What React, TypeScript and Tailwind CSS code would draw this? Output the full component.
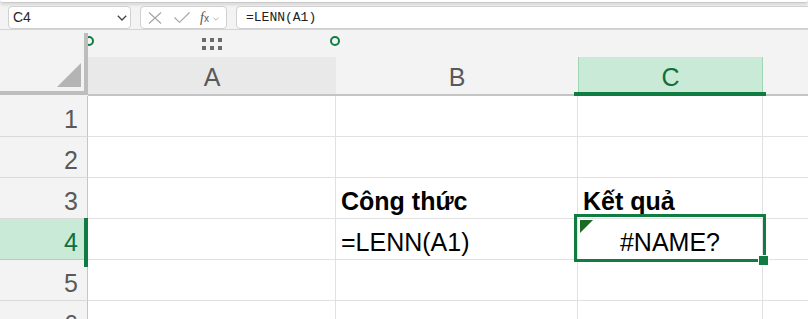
import React from "react";

type Cell = { text: string; bold?: boolean; center?: boolean; error?: boolean };

const COLS = [
  { key: "A", w: "w-[248px]" },
  { key: "B", w: "w-[242px]" },
  { key: "C", w: "w-[185px]" },
];

const ROWS: { n: number; cells: Record<string, Cell> }[] = [
  { n: 1, cells: {} },
  { n: 2, cells: {} },
  { n: 3, cells: { B: { text: "Công thức", bold: true }, C: { text: "Kết quả", bold: true } } },
  { n: 4, cells: { B: { text: "=LENN(A1)" }, C: { text: "#NAME?", center: true, error: true } } },
  { n: 5, cells: {} },
  { n: 6, cells: {} },
];

function Chevron({ className }: { className?: string }) {
  return (
    <svg viewBox="0 0 10 6" className={className} fill="none" stroke="currentColor" strokeWidth="1.3">
      <path d="M0.8 0.8 L5 5 L9.2 0.8" />
    </svg>
  );
}

function FormulaBar() {
  return (
    <div className="flex h-[27px] items-end gap-[9px] border-b border-[#d4d4d4] px-2">
      {/* name box */}
      <div className="flex h-[23px] w-[123px] items-center justify-between rounded-[4px] border border-[#d0d0d0] bg-white pl-[4px] pr-[3px] text-[14px] text-[#262626]">
        <span>C4</span>
        <Chevron className="h-[6px] w-[10px] text-[#444]" />
      </div>

      {/* cancel / enter / fx */}
      <div className="flex h-[23px] w-[87px] items-center rounded-[4px] border border-[#d0d0d0] bg-white pl-[7px]">
        <svg viewBox="0 0 14 12" className="h-[12px] w-[14px]" stroke="#a3a3a3" strokeWidth="1.1" fill="none">
          <path d="M1 0.5 L13 11.5 M13 0.5 L1 11.5" />
        </svg>
        <svg viewBox="0 0 16 11" className="ml-[12px] h-[11px] w-[16px]" stroke="#a3a3a3" strokeWidth="1.1" fill="none">
          <path d="M0.5 5.5 L5.5 10.3 L15.5 0.5" />
        </svg>
        <span className="ml-[10px] font-['Liberation_Serif',serif] text-[14px] italic leading-none text-[#555]">
          f<span className="text-[10px] not-italic font-['Liberation_Sans',sans-serif]">x</span>
        </span>
        <Chevron className="ml-[4px] mt-[2px] h-[4px] w-[6px] text-[#9a9a9a]" />
      </div>

      {/* formula input */}
      <div className="-mr-3 flex h-[23px] flex-1 items-center rounded-l-[4px] border border-[#d0d0d0] bg-white pl-[9px] font-['Liberation_Mono',monospace] text-[13px] text-[#222]">
        =LENN(A1)
      </div>
    </div>
  );
}

export default function App() {
  return (
    <div className="relative h-[319px] w-[808px] overflow-hidden bg-[#f3f3f3] font-['Liberation_Sans',Arial,sans-serif]">
      <div className="h-[3px] rounded-b-[6px] border-b border-[#c8c8c8] bg-white shadow-[0_2px_3px_rgba(0,0,0,0.12)]" />
      <FormulaBar />

      {/* column header block */}
      <div className="flex h-[66px]">
        <div className="relative z-10 w-[88px] pt-[3px]">
          <div className="relative h-[62px] border-b-[4px] border-r-[4px] border-[#bdbdbd]">
            <div className="absolute bottom-[4px] right-[3px] h-[24px] w-[24px] bg-[#b4b4b4] [clip-path:polygon(100%_0,100%_100%,0_100%)]" />
          </div>
        </div>
        <div className="flex flex-1 flex-col">
          <div className="flex h-[27px]">
            <div className="flex w-[248px] items-center justify-center">
              <div className="grid grid-cols-3 gap-x-[4px] gap-y-[4px]">
                {Array.from({ length: 6 }).map((_, i) => (
                  <span key={i} className="h-[4px] w-[4px] bg-[#6b6b6b]" />
                ))}
              </div>
            </div>
          </div>
          <div className="flex h-[39px] border-b-2 border-[#c4c4c4] text-[25px] leading-[28px]">
            <div className="flex w-[248px] items-end justify-center bg-[#e9e9e9] pb-[3px] text-[#595959]">A</div>
            <div className="flex w-[242px] items-end justify-center pb-[3px] text-[#595959]">B</div>
            <div className="flex w-[185px] items-end justify-center border-x border-[#9fd4b4] bg-[#caead8] pb-[3px] text-[#0f6f3a]">
              C
            </div>
            <div className="flex-1" />
          </div>
        </div>
      </div>

      {/* rows */}
      {ROWS.map((r) => {
        const sel = r.n === 4;
        return (
          <div key={r.n} className="flex h-[41px] text-[25px] leading-[28px]">
            <div
              className={
                sel
                  ? "flex w-[88px] items-end justify-end border-b border-r border-b-[#a8d6bb] border-r-[#c6c6c6] bg-[#caead8] pb-[3px] pr-[9px] text-[#0f6f3a]"
                  : "flex w-[88px] items-end justify-end border-b border-r border-b-[#dadada] border-r-[#c6c6c6] pb-[3px] pr-[9px] text-[#595959]"
              }
            >
              {r.n}
            </div>
            {COLS.map((c) => {
              const cell = r.cells[c.key];
              return (
                <div
                  key={c.key}
                  className={`relative flex ${c.w} items-end border-b border-r border-[#e1e1e1] bg-white pb-[3px] ${
                    cell?.center ? "justify-center" : "pl-[5px]"
                  } text-black`}
                >
                  {cell?.error && (
                    <div className="absolute left-[2px] top-[1px] h-[13px] w-[13px] bg-[#1d6b22] [clip-path:polygon(0_0,100%_0,0_100%)]" />
                  )}
                  {cell && <span className={cell.bold ? "font-bold" : ""}>{cell.text}</span>}
                </div>
              );
            })}
            <div className="flex-1 border-b border-[#e1e1e1] bg-white" />
          </div>
        );
      })}

      {/* column resize handles above A */}
      <div className="absolute left-[84px] top-[36px] h-[10px] w-[10px] rounded-full border-2 border-[#107c41]" />
      <div className="absolute left-[330px] top-[36px] h-[10px] w-[10px] rounded-full border-2 border-[#107c41]" />

      {/* selection markers */}
      <div className="absolute left-[574px] top-[92px] h-[4px] w-[192px] bg-[#107c41]" />
      <div className="absolute left-[84px] top-[218px] h-[49px] w-[4px] bg-[#107c41]" />
      <div className="absolute left-[574px] top-[214px] h-[48px] w-[192px] border-[3px] border-[#107c41]" />
      <div className="absolute left-[758px] top-[255px] h-[11px] w-[11px] border border-white bg-[#107c41]" />
    </div>
  );
}
